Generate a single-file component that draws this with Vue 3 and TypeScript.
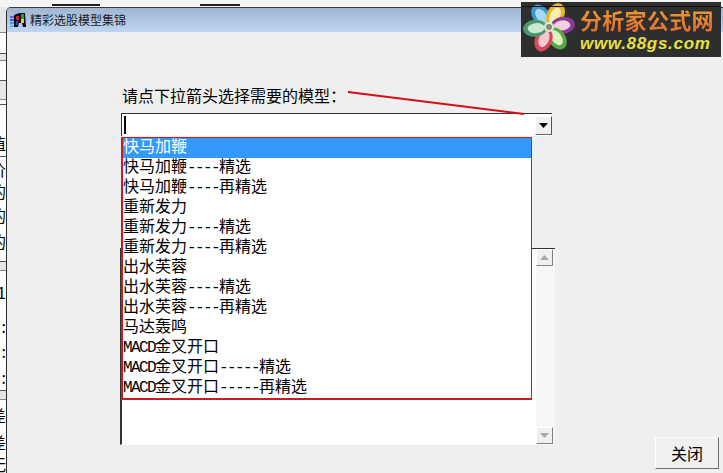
<script setup lang="ts">
interface Seg { text: string; latin: boolean }
interface SideRow { h: number; text?: string; line?: boolean; shade?: boolean }

const models = [
  '快马加鞭',
  '快马加鞭----精选',
  '快马加鞭----再精选',
  '重新发力',
  '重新发力----精选',
  '重新发力----再精选',
  '出水芙蓉',
  '出水芙蓉----精选',
  '出水芙蓉----再精选',
  '马达轰鸣',
  'MACD金叉开口',
  'MACD金叉开口-----精选',
  'MACD金叉开口-----再精选',
]

// half width characters are set in a mono font so they take 8px like the bitmap font
const split = (s: string): Seg[] =>
  (s.match(/[\x00-\x7f]+|[^\x00-\x7f]+/g) ?? []).map((text) => ({
    text,
    latin: /^[\x00-\x7f]/.test(text),
  }))

const items = models.map((name) => split(name))

// what is left visible of the window behind, at the left edge
const sideRows: SideRow[] = [
  { h: 26, line: true, shade: true },
  { h: 21, line: true },
  { h: 7, line: true, shade: true },
  { h: 20, line: true },
  { h: 19, line: true, shade: true },
  { h: 5, line: true },
  { h: 25 },
  { h: 27, text: '值', line: true },
  { h: 24, text: '价' },
  { h: 20, text: '的' },
  { h: 28, text: '的' },
  { h: 23, text: '的' },
  { h: 10, line: true },
  { h: 9, line: true, shade: true },
  { h: 42, text: '1' },
  { h: 25, text: ':' },
  { h: 26, text: ':' },
  { h: 27, text: ':', line: true },
  { h: 9, line: true, shade: true },
  { h: 29, text: '差' },
  { h: 25, text: '差' },
  { h: 19, text: '无' },
]

const petals = [
  { angle: -35, outer: '#3a9ad0', inner: '#a8d8ee' },
  { angle: 28, outer: '#e8b820', inner: '#f8eeb0' },
  { angle: 83, outer: '#8a3a98', inner: '#f0d0e0' },
  { angle: 145, outer: '#58a848', inner: '#e0f0c0' },
  { angle: 203, outer: '#d84858', inner: '#f8c8d0' },
  { angle: 265, outer: '#4a9870', inner: '#c8e8d0' },
]
</script>

<template>
  <div class="screen">
    <div class="top-strip">
      <i class="seg seg-a"></i>
      <i class="seg seg-b"></i>
    </div>
    <div class="middle">
      <div class="side">
        <div
          v-for="(row, i) in sideRows"
          :key="i"
          class="side-row"
          :class="{ line: row.line, shade: row.shade }"
          :style="{ height: row.h + 'px' }"
        >
          {{ row.text }}
        </div>
      </div>
      <div class="window">
        <div class="titlebar">
          <svg class="app-icon" width="17" height="15" viewBox="0 0 17 15">
            <rect x="0" y="3" width="5" height="2" fill="#6a5ad8" />
            <rect x="0" y="6" width="5" height="2" fill="#3060e8" />
            <rect x="0" y="9" width="5" height="2" fill="#30a0e8" />
            <rect x="0" y="12" width="5" height="2" fill="#50c0f0" />
            <path d="M4 2 L9 0 H15 L16 14 H13 L12 10 H9 L8 14 H4 Z" fill="#0c0c1c" />
            <rect x="6" y="3" width="3" height="4" fill="#d02020" />
            <rect x="11" y="1" width="3" height="5" fill="#20a030" />
            <rect x="6" y="8" width="2" height="4" fill="#2040d0" />
            <rect x="11" y="6" width="3" height="4" fill="#e8d020" />
          </svg>
          <span class="title">精彩选股模型集锦</span>
        </div>
        <div class="body">
          <div class="form">
            <div class="prompt">请点下拉箭头选择需要的模型：</div>
            <div class="combo">
              <i class="caret"></i>
              <span class="combo-btn">
                <svg width="9" height="5" viewBox="0 0 9 5"><path d="M0 0H9L4.5 5Z" fill="#000" /></svg>
              </span>
              <ul class="dropdown">
                <li v-for="(item, i) in items" :key="i" :class="{ selected: i === 0 }">
                  <span v-for="(seg, j) in item" :key="j" :class="{ latin: seg.latin }">{{ seg.text }}</span>
                </li>
              </ul>
            </div>
            <div class="memo">
              <div class="memo-text"></div>
              <div class="scrollbar">
                <span class="scroll-btn">
                  <svg width="9" height="5" viewBox="0 0 9 5"><path d="M0 5H9L4.5 0Z" fill="#a8a8a8" /></svg>
                </span>
                <span class="scroll-btn">
                  <svg width="9" height="5" viewBox="0 0 9 5"><path d="M0 0H9L4.5 5Z" fill="#a8a8a8" /></svg>
                </span>
              </div>
            </div>
          </div>
          <button class="close" type="button">关闭</button>
        </div>
      </div>
    </div>

    <svg class="pointer" width="180" height="26" viewBox="0 0 180 26">
      <path d="M1 2 L177 24" stroke="#d40f14" stroke-width="1.8" fill="none" />
    </svg>

    <div class="logo">
      <svg class="flower" width="56" height="52" viewBox="0 0 56 52">
        <g v-for="(p, i) in petals" :key="i" :transform="`rotate(${p.angle} 28 25)`">
          <ellipse cx="28" cy="11" rx="8.5" ry="12" :fill="p.outer" />
          <ellipse cx="28" cy="12" rx="5" ry="8.5" :fill="p.inner" />
        </g>
        <circle cx="28" cy="25" r="5" fill="#e8e8d8" />
        <circle cx="28" cy="25" r="3" fill="#808878" />
      </svg>
      <div class="logo-text">
        <div class="logo-name">分析家公式网</div>
        <div class="logo-url">www.88gs.com</div>
      </div>
    </div>
  </div>
</template>

<style>
html,
body {
  margin: 0;
  padding: 0;
  background: #fff;
}
</style>

<style scoped>
.screen {
  position: relative;
  width: 723px;
  height: 473px;
  overflow: hidden;
  display: flex;
  flex-direction: column;
  background: #f4f4f4;
  font-family: "Noto Sans CJK SC", "Liberation Sans", sans-serif;
  color: #000;
}

.top-strip {
  height: 7px;
  flex: none;
  position: relative;
}

.seg {
  position: absolute;
  top: 4px;
  height: 2px;
  background: #222;
}

.seg-a {
  left: 52px;
  width: 48px;
}

.seg-b {
  left: 200px;
  width: 40px;
}

.middle {
  flex: 1;
  display: flex;
  min-height: 0;
}

.side {
  width: 6px;
  flex: none;
  overflow: hidden;
  background: #fdfdfd;
}

.side-row {
  box-sizing: border-box;
  display: flex;
  justify-content: flex-end;
  align-items: center;
  font-size: 16px;
  line-height: 16px;
  overflow: hidden;
}

.side-row.line {
  border-bottom: 1px solid #555;
}

.side-row.shade {
  background: #e6e6e6;
  border-bottom-color: #888;
}

.window {
  flex: 1;
  display: flex;
  flex-direction: column;
  min-width: 0;
  background: #efefef;
  border-left: 1px solid #2c2c2c;
  border-top: 1px solid #3a3a3a;
  border-top-left-radius: 5px;
  overflow: hidden;
}

.titlebar {
  height: 24px;
  flex: none;
  display: flex;
  align-items: center;
  gap: 3px;
  padding-left: 3px;
  background: linear-gradient(#a0b6d2, #bfd4ee);
}

.app-icon {
  flex: none;
}

.title {
  font-size: 12px;
  line-height: 16px;
  color: #1c1c1c;
}

.body {
  flex: 1;
  display: flex;
  min-height: 0;
  padding: 53px 4px 4px 113px;
}

.form {
  width: 435px;
  flex: none;
}

.prompt {
  height: 20px;
  padding-left: 2px;
  font-size: 16px;
  line-height: 20px;
  white-space: nowrap;
}

.combo {
  position: relative;
  box-sizing: border-box;
  width: 431px;
  height: 23px;
  margin: 8px 0 0 1px;
  padding: 2px 0 1px 2px;
  display: flex;
  justify-content: space-between;
  align-items: stretch;
  background: #fff;
  border-top: 1px solid #333;
  border-left: 1px solid #333;
}

.caret {
  width: 2px;
  background: #000;
  margin-bottom: 1px;
}

.combo-btn,
.scroll-btn {
  box-sizing: border-box;
  width: 17px;
  display: flex;
  align-items: center;
  justify-content: center;
  background: #f0f0f0;
  border: 1px solid;
  border-color: #fff #555 #666 #fff;
}

.dropdown {
  position: absolute;
  top: 23px;
  left: -1px;
  box-sizing: border-box;
  width: 411px;
  height: 263px;
  margin: 0;
  padding: 0;
  list-style: none;
  background: #fff;
  border-style: solid;
  border-color: #cc1a22;
  border-width: 1px 1px 2px 2px;
  font-size: 16px;
  z-index: 1;
}

.dropdown li {
  height: 20px;
  line-height: 15px;
  white-space: nowrap;
}

.dropdown .selected {
  background: #3399ff;
  color: #fff;
}

.latin {
  font-family: "Liberation Mono", monospace;
  font-size: 16px;
  letter-spacing: -1.6px;
}

.memo {
  height: 197px;
  margin-top: 112px;
  display: flex;
  background: #fff;
  border-left: 2px solid #333;
  border-bottom: 1px solid #fafafa;
  box-sizing: border-box;
}

.memo-text {
  flex: 1;
  border-top: 1px solid #333;
}

.scrollbar {
  width: 18px;
  flex: none;
  display: flex;
  flex-direction: column;
  justify-content: space-between;
  background: #f7f7f7;
  border-top: 1px solid #333;
  padding-right: 1px;
}

.scrollbar .scroll-btn {
  height: 17px;
  border-color: #fff #808080 #808080 #fff;
}

.close {
  align-self: flex-end;
  width: 64px;
  height: 32px;
  margin-left: auto;
  padding: 0;
  background: #f0f0f0;
  border: 1px solid;
  border-color: #fff #707070 #707070 #fff;
  font-family: inherit;
  font-size: 16px;
  color: #000;
}

.pointer {
  position: absolute;
  left: 347px;
  top: 90px;
  z-index: 2;
}

.logo {
  position: absolute;
  left: 521px;
  top: 2px;
  width: 200px;
  height: 55px;
  display: flex;
  background: #2e2e2e;
  z-index: 3;
  border-top: 3px solid #2e2e2e;
  box-sizing: border-box;
}

.logo::before {
  content: "";
  position: absolute;
  left: 0;
  right: 0;
  top: 1px;
  height: 1px;
  background: #111;
}

.flower {
  flex: none;
  margin-top: -3px;
}

.logo-text {
  margin-left: 3px;
  display: flex;
  flex-direction: column;
}

.logo-name {
  height: 30px;
  font-size: 22px;
  line-height: 28px;
  font-weight: 700;
  letter-spacing: 0.3px;
  white-space: nowrap;
  background: linear-gradient(#f0a030, #e06830);
  -webkit-background-clip: text;
  background-clip: text;
  color: transparent;
}

.logo-url {
  font-family: "Liberation Sans", sans-serif;
  font-size: 17px;
  line-height: 18px;
  font-weight: 700;
  font-style: italic;
  letter-spacing: 0.7px;
  color: #e6e040;
  white-space: nowrap;
}
</style>
